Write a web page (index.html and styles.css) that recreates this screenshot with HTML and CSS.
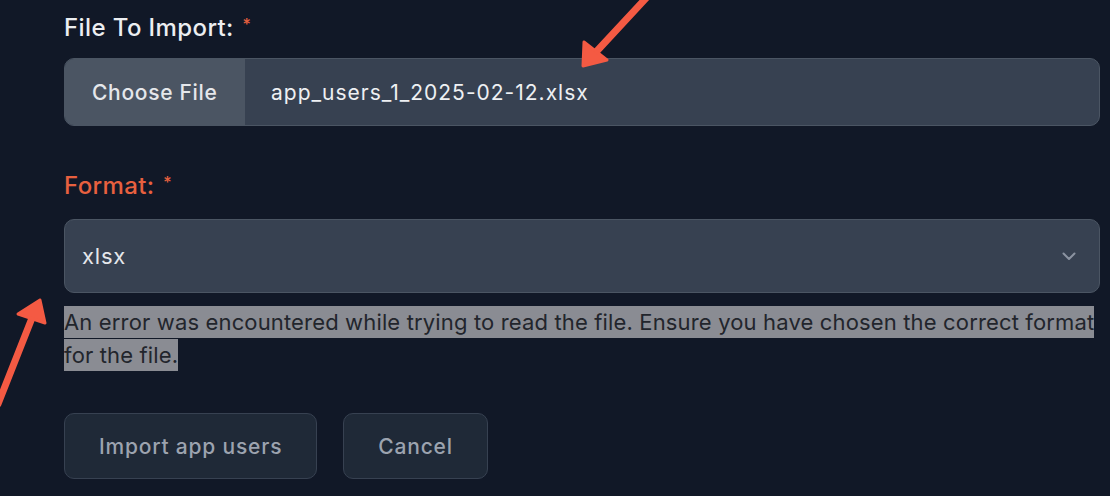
FILE: index.html
```html
<!DOCTYPE html>
<html lang="en">
<head>
    <meta charset="UTF-8">
    <meta name="viewport" content="width=device-width, initial-scale=1.0">
    <title>Import App Users</title>
    <link rel="stylesheet" href="styles.css">
</head>
<body>

    <form class="import-form">
        <div class="field">
            <label class="field-label">File To Import: <sup class="req">*</sup></label>
            <div class="file-input">
                <span class="file-btn">Choose File</span>
                <span class="file-name">app_users_1_2025-02-12.xlsx</span>
            </div>
        </div>

        <div class="field field-format">
            <label class="field-label is-error">Format: <sup class="req">*</sup></label>
            <div class="select">
                <span>xlsx</span>
                <svg class="chevron" width="20" height="20" viewBox="0 0 20 20" fill="none">
                    <path d="M4.5 7.5 10 13l5.5-5.5" stroke="currentColor" stroke-width="2" stroke-linecap="round" stroke-linejoin="round"/>
                </svg>
            </div>
            <p class="error-text"><span class="highlight">An error was encountered while trying to read the file. Ensure you have chosen the correct format for the file.</span></p>
        </div>

        <div class="actions">
            <button type="button" class="btn">Import app users</button>
            <button type="button" class="btn">Cancel</button>
        </div>
    </form>

    <!-- annotation arrows drawn over the screenshot -->
    <svg class="annotations" width="1110" height="496" viewBox="0 0 1110 496">
        <g fill="#f45a43" stroke="#f45a43" stroke-linecap="round" stroke-linejoin="round">
            <path d="M648 -4 596 52" stroke-width="7" fill="none"/>
            <path d="M583 66 584 42 607 60Z" stroke-width="3"/>
            <path d="M-2 404 32 318" stroke-width="7" fill="none"/>
            <path d="M40 300 18 314 45 323Z" stroke-width="3"/>
        </g>
    </svg>

</body>
</html>
```

FILE: styles.css
```css
body { margin: 0; background: #111827; font-family: Inter, "Noto Sans", sans-serif; color: #e5e7eb; height: 496px; overflow: hidden; position: relative; }
.import-form { padding: 14px 10px 0 64px; }
.field-label { display: block; font-size: 24px; line-height: 28px; font-weight: 500; letter-spacing: 0.4px; color: #eceef1; }
.field-label.is-error { color: #e8603f; }
.req { color: #e8603f; font-size: 16px; vertical-align: 6px; line-height: 0; margin-left: 2px; }
.file-input { display: flex; height: 68px; margin-top: 16px; border: 1px solid #4b5563; border-radius: 10px; overflow: hidden; background: #374151; box-sizing: border-box; align-items: stretch; }
.file-btn { display: flex; align-items: center; padding: 0 27px; width: 180px; box-sizing: border-box; background: #4b5563; font-size: 21px; font-weight: 500; letter-spacing: 0.7px; color: #e5e7eb; }
.file-name { display: flex; align-items: center; padding-left: 26px; font-size: 21px; letter-spacing: 1px; color: #eef0f3; }
.field-format { margin-top: 46px; }
.select { display: flex; align-items: center; justify-content: space-between; height: 74px; margin-top: 19px; padding: 0 20px 0 17px; border: 1px solid #4b5563; border-radius: 10px; background: #374151; box-sizing: border-box; font-size: 22px; letter-spacing: 0.8px; color: #e5e7eb; }
.chevron { color: #8b93a1; }
.error-text { margin: 13px 0 0; font-size: 22px; line-height: 33px; letter-spacing: 0.15px; color: #22252c; }
.highlight { background: #8a8c93; padding: 3px 0; }
.actions { display: flex; gap: 26px; margin-top: 41px; }
.btn { height: 66px; padding: 0 34px; font-family: inherit; font-size: 21px; font-weight: 500; letter-spacing: 0.8px; color: #9ca3af; background: #1f2937; border: 1px solid #374151; border-radius: 10px; }
.annotations { position: absolute; left: 0; top: 0; pointer-events: none; }
```
